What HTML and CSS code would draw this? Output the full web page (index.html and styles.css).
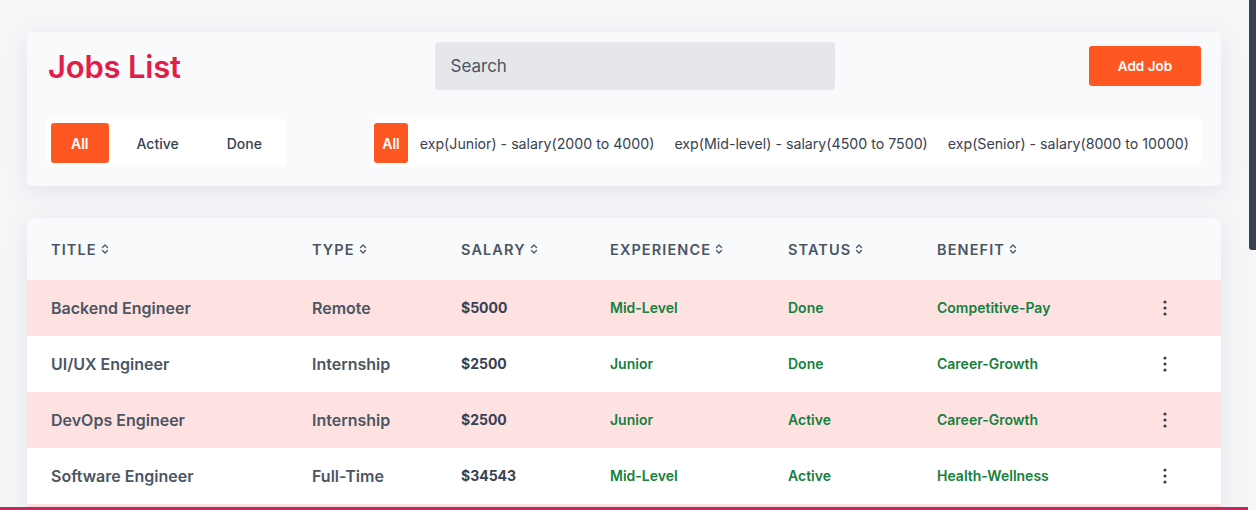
FILE: index.html
```html
<!DOCTYPE html>
<html lang="en">
<head>
<meta charset="utf-8">
<title>Jobs List</title>
<link rel="stylesheet" href="styles.css">
</head>
<body>
<div class="page">
  <section class="card header-card">
    <div class="top-row">
      <h1 class="title">Jobs List</h1>
      <input class="search" type="text" placeholder="Search">
      <button class="btn-primary">Add Job</button>
    </div>
    <div class="filter-row">
      <div class="seg seg-status">
        <button class="seg-btn is-active">All</button>
        <button class="seg-btn">Active</button>
        <button class="seg-btn">Done</button>
      </div>
      <div class="seg seg-exp">
        <button class="exp-btn is-active">All</button>
        <button class="exp-btn">exp(Junior) - salary(2000 to 4000)</button>
        <button class="exp-btn">exp(Mid-level) - salary(4500 to 7500)</button>
        <button class="exp-btn">exp(Senior) - salary(8000 to 10000)</button>
      </div>
    </div>
  </section>

  <section class="card table-card">
    <table class="jobs">
      <thead>
        <tr>
          <th class="c-title"><span class="th">TITLE <svg class="sort" viewBox="0 0 8 12"><path d="M1.5 4.5 L4 2 L6.5 4.5 M1.5 7.5 L4 10 L6.5 7.5"/></svg></span></th>
          <th class="c-mid"><span class="th">TYPE <svg class="sort" viewBox="0 0 8 12"><path d="M1.5 4.5 L4 2 L6.5 4.5 M1.5 7.5 L4 10 L6.5 7.5"/></svg></span></th>
          <th class="c-mid"><span class="th">SALARY <svg class="sort" viewBox="0 0 8 12"><path d="M1.5 4.5 L4 2 L6.5 4.5 M1.5 7.5 L4 10 L6.5 7.5"/></svg></span></th>
          <th class="c-exp"><span class="th">EXPERIENCE <svg class="sort" viewBox="0 0 8 12"><path d="M1.5 4.5 L4 2 L6.5 4.5 M1.5 7.5 L4 10 L6.5 7.5"/></svg></span></th>
          <th class="c-mid"><span class="th">STATUS <svg class="sort" viewBox="0 0 8 12"><path d="M1.5 4.5 L4 2 L6.5 4.5 M1.5 7.5 L4 10 L6.5 7.5"/></svg></span></th>
          <th class="c-benefit"><span class="th">BENEFIT <svg class="sort" viewBox="0 0 8 12"><path d="M1.5 4.5 L4 2 L6.5 4.5 M1.5 7.5 L4 10 L6.5 7.5"/></svg></span></th>
          <th class="c-act"></th>
        </tr>
      </thead>
      <tbody>
        <tr class="pink">
          <td class="t-title">Backend Engineer</td><td class="t-title">Remote</td><td class="t-salary">$5000</td>
          <td class="t-green">Mid-Level</td><td class="t-green">Done</td><td class="t-green">Competitive-Pay</td>
          <td><svg class="dots" viewBox="0 0 4 16"><circle cx="2" cy="2" r="1.6"/><circle cx="2" cy="8" r="1.6"/><circle cx="2" cy="14" r="1.6"/></svg></td>
        </tr>
        <tr>
          <td class="t-title">UI/UX Engineer</td><td class="t-title">Internship</td><td class="t-salary">$2500</td>
          <td class="t-green">Junior</td><td class="t-green">Done</td><td class="t-green">Career-Growth</td>
          <td><svg class="dots" viewBox="0 0 4 16"><circle cx="2" cy="2" r="1.6"/><circle cx="2" cy="8" r="1.6"/><circle cx="2" cy="14" r="1.6"/></svg></td>
        </tr>
        <tr class="pink">
          <td class="t-title">DevOps Engineer</td><td class="t-title">Internship</td><td class="t-salary">$2500</td>
          <td class="t-green">Junior</td><td class="t-green">Active</td><td class="t-green">Career-Growth</td>
          <td><svg class="dots" viewBox="0 0 4 16"><circle cx="2" cy="2" r="1.6"/><circle cx="2" cy="8" r="1.6"/><circle cx="2" cy="14" r="1.6"/></svg></td>
        </tr>
        <tr>
          <td class="t-title">Software Engineer</td><td class="t-title">Full-Time</td><td class="t-salary">$34543</td>
          <td class="t-green">Mid-Level</td><td class="t-green">Active</td><td class="t-green">Health-Wellness</td>
          <td><svg class="dots" viewBox="0 0 4 16"><circle cx="2" cy="2" r="1.6"/><circle cx="2" cy="8" r="1.6"/><circle cx="2" cy="14" r="1.6"/></svg></td>
        </tr>
        <tr class="pink sliver">
          <td></td><td></td><td></td><td></td><td></td><td></td><td></td>
        </tr>
      </tbody>
    </table>
  </section>
</div>
<div class="bottom-line"></div>
<div class="scroll-thumb"></div>
</body>
</html>
```

FILE: styles.css
```css
* { box-sizing: border-box; }

html, body {
  margin: 0;
  padding: 0;
  height: 510px;
  overflow: hidden;
}

body {
  background: #f5f6f8;
  font-family: Inter, "Noto Sans", "Liberation Sans", sans-serif;
  color: #374151;
}

.page {
  width: 1194px;
  margin-left: 27px;
  padding-top: 32px;
  display: flex;
  flex-direction: column;
  gap: 32px;
}

.card {
  background: #f9fafb;
  border-radius: 5px;
  box-shadow: 0 6px 24px rgba(30, 41, 59, 0.08);
}

.header-card {
  padding: 10px 20px 19px 20px;
  display: flex;
  flex-direction: column;
  gap: 29px;
}

.top-row {
  display: flex;
  align-items: center;
  justify-content: space-between;
  height: 48px;
}

.title {
  margin: 0;
  width: 133px;
  padding-left: 1px;
  font-size: 31px;
  font-weight: 600;
  color: #e11d48;
  letter-spacing: -0.2px;
  white-space: nowrap;
}

.search {
  width: 400px;
  height: 48px;
  border: none;
  border-radius: 4px;
  background: #e5e7eb;
  padding: 0 16px;
  font-family: inherit;
  font-size: 17px;
  color: #374151;
  outline: none;
}
.search::placeholder { color: #4b5563; }

.btn-primary {
  width: 112px;
  height: 40px;
  border: none;
  border-radius: 3px;
  background: #ff5722;
  color: #ffffff;
  font-family: inherit;
  font-size: 13.5px;
  font-weight: 600;
}

.filter-row {
  display: flex;
  justify-content: space-between;
  align-items: center;
  height: 48px;
}

.seg {
  background: #ffffff;
  border-radius: 3px;
  padding: 4px;
  display: flex;
  align-items: center;
  height: 48px;
}

.seg-status { gap: 8px; }
.seg-exp { gap: 4px; }

.seg-btn, .exp-btn {
  height: 40px;
  border: none;
  background: transparent;
  border-radius: 3px;
  font-family: inherit;
  font-size: 14px;
  color: #374151;
  white-space: nowrap;
}

.seg-btn { padding: 0 20px; font-weight: 500; }
.exp-btn { padding: 0 8px; font-weight: 400; font-size: 14.2px; }

.seg-btn.is-active, .exp-btn.is-active {
  background: #ff5722;
  color: #ffffff;
  font-weight: 600;
  font-size: 14px;
}

.table-card {
  border-radius: 6px 6px 0 0;
  overflow: hidden;
}

.jobs {
  width: 1194px;
  border-collapse: collapse;
  table-layout: fixed;
}

.jobs th.c-title { width: 261px; }
.jobs th.c-mid { width: 149px; }
.jobs th.c-exp { width: 178px; }
.jobs th.c-benefit { width: 226px; }
.jobs th.c-act { width: 82px; }

.jobs th {
  height: 62px;
  padding: 0 0 1px 24px;
  text-align: left;
  background: #f9fafb;
}

.th {
  display: inline-flex;
  align-items: center;
  gap: 4px;
  font-size: 14.5px;
  font-weight: 600;
  letter-spacing: 1.1px;
  color: #4b5563;
}

.sort {
  width: 8px;
  height: 12px;
  fill: none;
  stroke: #4b5563;
  stroke-width: 1.3;
  stroke-linecap: round;
  stroke-linejoin: round;
}

.jobs td {
  height: 56px;
  padding: 0 0 1px 24px;
  background: #ffffff;
  white-space: nowrap;
}

.jobs tr.pink td { background: #fee2e2; }

.t-title {
  font-size: 16px;
  font-weight: 600;
  color: #4b5563;
}

.t-salary {
  font-size: 14px;
  font-weight: 700;
  color: #374151;
}

.t-green {
  font-size: 14px;
  font-weight: 600;
  color: #15803d;
}

.dots {
  display: block;
  width: 4px;
  height: 16px;
  fill: #374151;
}

.bottom-line {
  position: fixed;
  left: 0;
  bottom: 0;
  width: 1248px;
  height: 3px;
  background: #bd2a5d;
}

.scroll-thumb {
  position: fixed;
  top: 0;
  right: 0;
  width: 7px;
  height: 250px;
  background: #374151;
  border-radius: 0 0 0 3px;
}
```
